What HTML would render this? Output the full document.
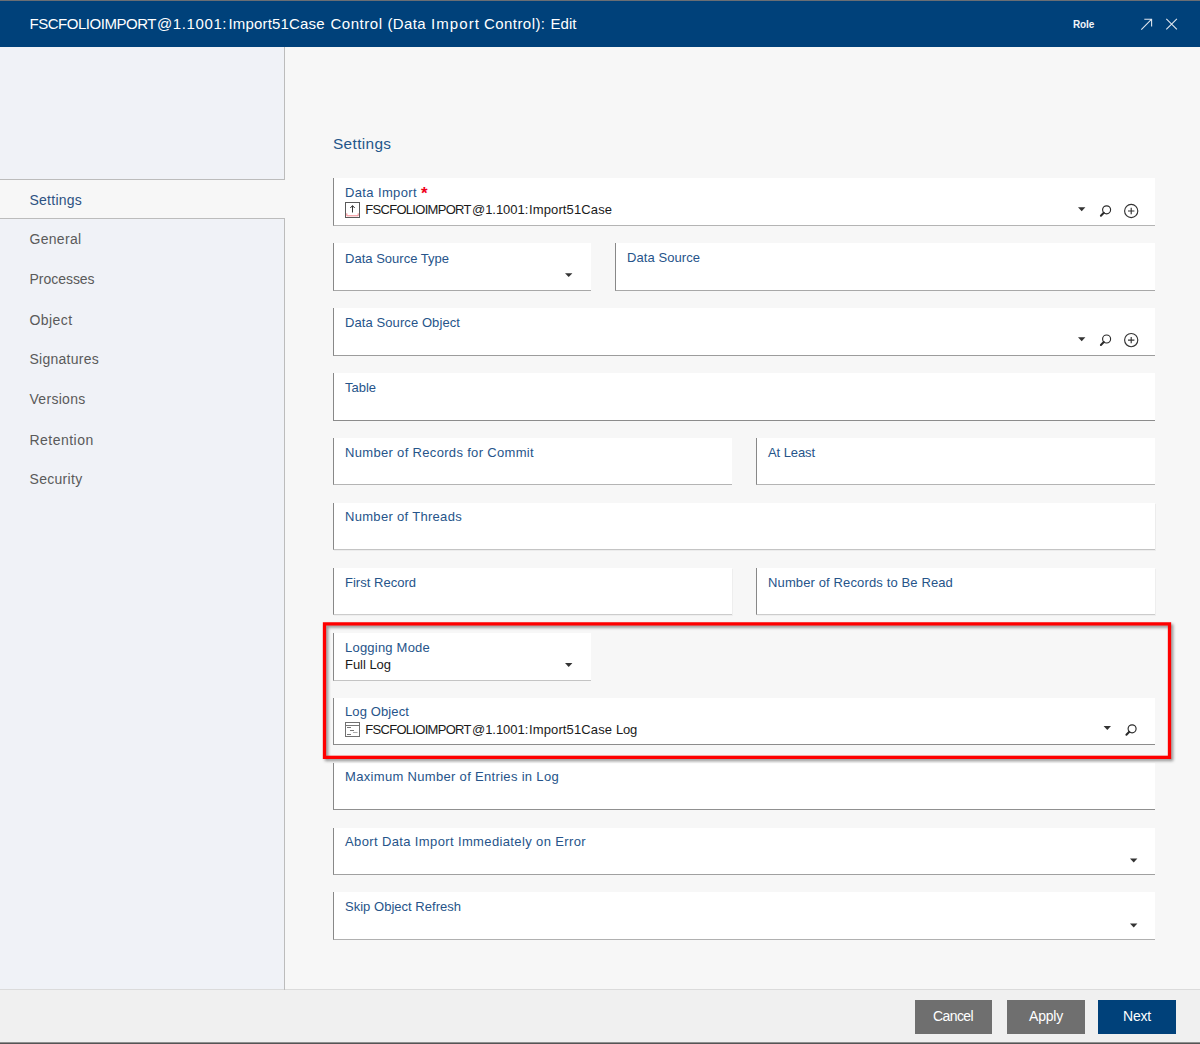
<!DOCTYPE html><html lang="en"><head><meta charset="utf-8"><title>Edit</title><style>
*{box-sizing:border-box;margin:0;padding:0}
html,body{width:1200px;height:1044px;overflow:hidden}
body{position:relative;background:#f7f7f7;font-family:"Liberation Sans",sans-serif;color:#1a1a1a}
.abs,.t,.f{position:absolute}
.t{white-space:pre;line-height:1}
#hdr{left:0;top:0;width:1200px;height:47px;background:#00417a;border-top:1px solid #6a6e74}
#sb1{left:0;top:47px;width:285px;height:133px;background:#f0f2f7;border-right:1px solid #bcbcbc;border-bottom:1px solid #bcbcbc}
#sb2{left:0;top:218px;width:285px;height:771px;background:#f0f2f7;border-right:1px solid #bcbcbc;border-top:1px solid #bcbcbc}
#sbx{left:284px;top:989px;width:1px;height:1px;background:#bcbcbc;z-index:3}
#ftr{left:0;top:989px;width:1200px;height:55px;background:#f0f0f0;border-top:1px solid #dbdbdb;border-bottom:1px solid #555;box-shadow:inset 0 -1px 0 #909090}
/*nav*/.nav{left:29px;font-size:14px;color:#555}
.f{background:#fff;border-left:1px solid #888;border-bottom:1px solid #8c8c8c}
.l{font-size:13px;color:#26548a}
.v{font-size:13px;color:#1a1a1a}
.btn{position:absolute;top:1000px;height:34px;background:#6f6f6f}
.btn .t{color:#fff;font-size:14px;top:9px}
svg{position:absolute;overflow:visible}
</style></head><body>
<div id="hdr" class="abs"></div>
<div class="t" style="left:29.5px;top:16px;font-size:15px;color:#fff;font-weight:400;letter-spacing:-0.468px">FSCFOLIOIMPORT</div><div class="t" style="left:157px;top:16px;font-size:15px;color:#fff;font-weight:400;letter-spacing:0.603px">@1.1001:</div><div class="t" style="left:228.5px;top:16px;font-size:15px;color:#fff;font-weight:400;letter-spacing:0.162px">Import51Case</div><div class="t" style="left:330.5px;top:16px;font-size:15px;color:#fff;font-weight:400;letter-spacing:0.523px">Control</div><div class="t" style="left:387.5px;top:16px;font-size:15px;color:#fff;font-weight:400;letter-spacing:0.328px">(Data</div><div class="t" style="left:431px;top:16px;font-size:15px;color:#fff;font-weight:400;letter-spacing:1.097px">Import</div><div class="t" style="left:484px;top:16px;font-size:15px;color:#fff;font-weight:400;letter-spacing:0.434px">Control):</div><div class="t" style="left:550.5px;top:16px;font-size:15px;color:#fff;font-weight:400;letter-spacing:0.047px">Edit</div>
<div class="t" style="left:1073px;top:20px;font-size:10px;font-weight:700;color:#f2f5f9;letter-spacing:-0.15px">Role</div>
<svg style="left:1141px;top:18px" width="12" height="12" viewBox="0 0 12 12" fill="none" stroke="#dfe6ee" stroke-width="1.1"><path d="M0.3 11.6 L10.4 1.4 M3.3 1.2 H10.6 V8.4"/></svg>
<svg style="left:1166px;top:18px" width="12" height="12" viewBox="0 0 12 12" fill="none" stroke="#dfe6ee" stroke-width="1.1"><path d="M0.3 0.8 L10.9 11.4 M10.9 0.8 L0.3 11.4"/></svg>
<div id="sb1" class="abs"></div><div id="sb2" class="abs"></div><div id="sbx" class="abs"></div>
<div class="t" style="left:29.5px;top:193px;font-size:14px;color:#2d5282;font-weight:400;letter-spacing:0.244px">Settings</div>
<div class="t" style="left:29.5px;top:232px;font-size:14px;color:#5a5a5a;font-weight:400;letter-spacing:0.298px">General</div>
<div class="t" style="left:29.5px;top:272px;font-size:14px;color:#5a5a5a;font-weight:400;letter-spacing:-0.032px">Processes</div>
<div class="t" style="left:29.5px;top:313px;font-size:14px;color:#5a5a5a;font-weight:400;letter-spacing:0.446px">Object</div>
<div class="t" style="left:29.5px;top:352px;font-size:14px;color:#5a5a5a;font-weight:400;letter-spacing:0.251px">Signatures</div>
<div class="t" style="left:29.5px;top:392px;font-size:14px;color:#5a5a5a;font-weight:400;letter-spacing:0.3px">Versions</div>
<div class="t" style="left:29.5px;top:433px;font-size:14px;color:#5a5a5a;font-weight:400;letter-spacing:0.47px">Retention</div>
<div class="t" style="left:29.5px;top:472px;font-size:14px;color:#5a5a5a;font-weight:400;letter-spacing:0.303px">Security</div>
<div class="t" style="left:333px;top:135.6px;font-size:15.4px;color:#24568a;letter-spacing:0.35px">Settings</div>
<div class="f" style="left:333px;top:178px;width:822px;height:48px;border-bottom-color:#b4b4b4"></div>
<div class="t l" style="left:345px;top:186px;letter-spacing:0.371px">Data Import</div>
<div class="t" style="left:421px;top:185px;font-size:17px;font-weight:700;color:#f0001a">*</div>
<svg style="left:345px;top:202px" width="15" height="16" viewBox="0 0 15 16" fill="none" ><g transform="translate(0 0)"><rect x="0.5" y="0.5" width="14" height="15" stroke="#5a5a5a"/><path d="M7.5 10.5V3.8M5.3 6L7.5 3.6L9.7 6" stroke="#333" stroke-width="1"/><path d="M1.8 11.3V13.8H13.2V11.3" stroke="#f0858c" stroke-width="1"/></g></svg>
<div class="t" style="left:365.3px;top:203px;font-size:13px;color:#1a1a1a;font-weight:400;letter-spacing:-0.702px">FSCFOLIOIMPORT</div><div class="t" style="left:472px;top:203px;font-size:13px;color:#1a1a1a;font-weight:400;letter-spacing:-0.04px">@1.1001:</div><div class="t" style="left:529px;top:203px;font-size:13px;color:#1a1a1a;font-weight:400;letter-spacing:0.122px">Import51Case</div>
<svg style="left:1078px;top:207px" width="8" height="4" viewBox="0 0 8 4" fill="none" ><g transform="translate(0 0.3)"><path d="M0 0H7.4L3.7 3.9Z" fill="#333"/></g></svg>
<svg style="left:1100px;top:205px" width="12" height="12" viewBox="0 0 12 12" fill="none" stroke="#2a2a2a"><g transform="translate(0 0)"><circle cx="6.6" cy="4.8" r="4" stroke-width="1.15"/><path d="M3.8 7.8 L0.9 10.8" stroke-width="2" stroke-linecap="round"/></g></svg>
<svg style="left:1124px;top:204px" width="15" height="15" viewBox="0 0 15 15" fill="none" stroke="#333" stroke-width="1.15"><g transform="translate(0 0)"><circle cx="7.2" cy="7" r="6.6"/><path d="M7.2 3.8V10.2M4 7H10.4"/></g></svg>
<div class="f" style="left:333px;top:243px;width:258px;height:48px;border-bottom-color:#a8a8a8"></div>
<div class="t l" style="left:345px;top:252px;letter-spacing:0.011px">Data Source Type</div>
<svg style="left:565px;top:273px" width="8" height="4" viewBox="0 0 8 4" fill="none" ><g transform="translate(0 0.2)"><path d="M0 0H7.4L3.7 3.9Z" fill="#333"/></g></svg>
<div class="f" style="left:615px;top:243px;width:540px;height:48px;border-bottom-color:#a8a8a8"></div>
<div class="t l" style="left:627px;top:251px;letter-spacing:0.067px">Data Source</div>
<div class="f" style="left:333px;top:308px;width:822px;height:48px;border-bottom-color:#9c9c9c"></div>
<div class="t l" style="left:345px;top:316px;letter-spacing:0.086px">Data Source Object</div>
<svg style="left:1078px;top:337px" width="8" height="4" viewBox="0 0 8 4" fill="none" ><g transform="translate(0 0.3)"><path d="M0 0H7.4L3.7 3.9Z" fill="#333"/></g></svg>
<svg style="left:1100px;top:334px" width="12" height="12" viewBox="0 0 12 12" fill="none" stroke="#2a2a2a"><g transform="translate(0 0.2)"><circle cx="6.6" cy="4.8" r="4" stroke-width="1.15"/><path d="M3.8 7.8 L0.9 10.8" stroke-width="2" stroke-linecap="round"/></g></svg>
<svg style="left:1124px;top:333px" width="15" height="15" viewBox="0 0 15 15" fill="none" stroke="#333" stroke-width="1.15"><g transform="translate(0 0.1)"><circle cx="7.2" cy="7" r="6.6"/><path d="M7.2 3.8V10.2M4 7H10.4"/></g></svg>
<div class="f" style="left:333px;top:373px;width:822px;height:48px;border-bottom-color:#8c8c8c"></div>
<div class="t l" style="left:345px;top:381px;letter-spacing:-0.016px">Table</div>
<div class="f" style="left:333px;top:438px;width:399px;height:47px;border-bottom-color:#b4b4b4"></div>
<div class="t l" style="left:345px;top:446px;letter-spacing:0.325px">Number of Records for Commit</div>
<div class="f" style="left:756px;top:438px;width:399px;height:47px;border-bottom-color:#b4b4b4"></div>
<div class="t l" style="left:768px;top:446px;letter-spacing:-0.088px">At Least</div>
<div class="f" style="left:333px;top:503px;width:822px;height:47px;border-bottom-color:#c4c4c4;box-shadow:1px 1px 0 #ececec"></div>
<div class="t l" style="left:345px;top:510px;letter-spacing:0.308px">Number of Threads</div>
<div class="f" style="left:333px;top:568px;width:399px;height:47px;border-bottom-color:#cccccc;box-shadow:1px 1px 0 #eeeeee"></div>
<div class="t l" style="left:345px;top:576px;letter-spacing:0.017px">First Record</div>
<div class="f" style="left:756px;top:568px;width:399px;height:47px;border-bottom-color:#cccccc;box-shadow:1px 1px 0 #eeeeee"></div>
<div class="t l" style="left:768px;top:576px;letter-spacing:0.129px">Number of Records to Be Read</div>
<div class="f" style="left:333px;top:633px;width:258px;height:48px;border-bottom-color:#c4c4c4"></div>
<div class="t l" style="left:345px;top:641px;letter-spacing:0.216px">Logging Mode</div>
<div class="t v" style="left:345px;top:658px;letter-spacing:-0.031px">Full Log</div>
<svg style="left:565px;top:663px" width="8" height="4" viewBox="0 0 8 4" fill="none" ><g transform="translate(0 0)"><path d="M0 0H7.4L3.7 3.9Z" fill="#333"/></g></svg>
<div class="f" style="left:333px;top:698px;width:822px;height:47px;border-bottom-color:#8c8c8c"></div>
<div class="t l" style="left:345px;top:705px;letter-spacing:0.113px">Log Object</div>
<svg style="left:345px;top:722px" width="15" height="15" viewBox="0 0 15 15" fill="none" ><g transform="translate(0 0)"><rect x="0.5" y="0.5" width="14" height="14" stroke="#707070"/><path d="M0.5 3.5H14.5" stroke="#777"/><path d="M2 5.5H6M5 8.5H9M2 12.5H6" stroke="#777" stroke-width="1"/><path d="M8 10.5H12.5" stroke="#aaa" stroke-width="1"/></g></svg>
<div class="t" style="left:365.3px;top:723px;font-size:13px;color:#1a1a1a;font-weight:400;letter-spacing:-0.702px">FSCFOLIOIMPORT</div><div class="t" style="left:472px;top:723px;font-size:13px;color:#1a1a1a;font-weight:400;letter-spacing:-0.04px">@1.1001:</div><div class="t" style="left:529px;top:723px;font-size:13px;color:#1a1a1a;font-weight:400;letter-spacing:0.122px">Import51Case</div><div class="t" style="left:616px;top:723px;font-size:13px;color:#1a1a1a;font-weight:400;letter-spacing:-0.202px">Log</div>
<svg style="left:1103px;top:726px" width="8" height="4" viewBox="0 0 8 4" fill="none" ><g transform="translate(0.6 0)"><path d="M0 0H7.4L3.7 3.9Z" fill="#333"/></g></svg>
<svg style="left:1125px;top:724px" width="12" height="12" viewBox="0 0 12 12" fill="none" stroke="#2a2a2a"><g transform="translate(0.5 0)"><circle cx="6.6" cy="4.8" r="4" stroke-width="1.15"/><path d="M3.8 7.8 L0.9 10.8" stroke-width="2" stroke-linecap="round"/></g></svg>
<div class="f" style="left:333px;top:763px;width:822px;height:47px;border-bottom-color:#909090"></div>
<div class="t l" style="left:345px;top:770px;letter-spacing:0.32px">Maximum Number of Entries in Log</div>
<div class="f" style="left:333px;top:828px;width:822px;height:47px;border-bottom-color:#a0a0a0"></div>
<div class="t l" style="left:345px;top:835px;letter-spacing:0.372px">Abort Data Import Immediately on Error</div>
<svg style="left:1130px;top:858px" width="8" height="4" viewBox="0 0 8 4" fill="none" ><g transform="translate(0 0.5)"><path d="M0 0H7.4L3.7 3.9Z" fill="#333"/></g></svg>
<div class="f" style="left:333px;top:892px;width:822px;height:48px;border-bottom-color:#b0b0b0"></div>
<div class="t l" style="left:345px;top:900px;letter-spacing:0.021px">Skip Object Refresh</div>
<svg style="left:1130px;top:923px" width="8" height="4" viewBox="0 0 8 4" fill="none" ><g transform="translate(0 0.5)"><path d="M0 0H7.4L3.7 3.9Z" fill="#333"/></g></svg>
<svg style="left:0;top:0;filter:drop-shadow(2px 2px 1.5px rgba(0,0,0,0.42))" width="1200" height="1044" viewBox="0 0 1200 1044" fill="none"><rect x="324.5" y="623.9" width="845" height="133.45" stroke="#ff0000" stroke-width="3.3"/></svg>
<div id="ftr" class="abs"></div>
<div class="btn" style="left:915px;width:77px;background:#6f6f6f"><div class="t" style="left:18px;letter-spacing:-0.599px">Cancel</div></div>
<div class="btn" style="left:1007px;width:78px;background:#6f6f6f"><div class="t" style="left:22px;letter-spacing:-0.206px">Apply</div></div>
<div class="btn" style="left:1098px;width:78px;background:#00417a"><div class="t" style="left:25px;letter-spacing:-0.199px">Next</div></div>
</body></html>
